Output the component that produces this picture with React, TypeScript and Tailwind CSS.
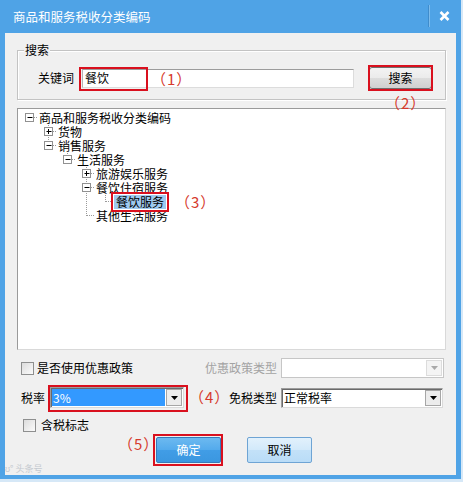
import React from 'react';

type TreeNode = {
  label: string;
  level: number;
  box?: '+' | '-';
  top: boolean;
  bottom: boolean;
  pass: number[];
  selected?: boolean;
};

const nodes: TreeNode[] = [
  { label: '商品和服务税收分类编码', level: 0, box: '-', top: false, bottom: false, pass: [] },
  { label: '货物', level: 1, box: '+', top: true, bottom: true, pass: [] },
  { label: '销售服务', level: 1, box: '-', top: true, bottom: false, pass: [] },
  { label: '生活服务', level: 2, box: '-', top: true, bottom: false, pass: [] },
  { label: '旅游娱乐服务', level: 3, box: '+', top: true, bottom: true, pass: [] },
  { label: '餐饮住宿服务', level: 3, box: '-', top: true, bottom: true, pass: [] },
  { label: '餐饮服务', level: 4, top: true, bottom: false, pass: [3], selected: true },
  { label: '其他生活服务', level: 3, top: true, bottom: false, pass: [] },
];

const dot = { stroke: '#9a9a9a', strokeWidth: 1, strokeDasharray: '1 1' };

// connector lines + expand box for one tree row
const Guides: React.FC<{ n: TreeNode }> = ({ n }) => {
  const w = 21 + 19 * n.level;
  const cx = 11.5 + 19 * n.level;
  const bx = 7.5 + 19 * n.level;
  return (
    <svg width={w} height={14} className="shrink-0">
      {n.pass.map((a) => (
        <line key={a} x1={11.5 + 19 * a} y1={0} x2={11.5 + 19 * a} y2={14} {...dot} />
      ))}
      {n.top && <line x1={cx} y1={0} x2={cx} y2={7} {...dot} />}
      {n.bottom && <line x1={cx} y1={6} x2={cx} y2={14} {...dot} />}
      <line x1={12 + 19 * n.level} y1={6.5} x2={w - 1} y2={6.5} {...dot} />
      {n.box && (
        <g>
          <rect x={bx} y={2.5} width={8} height={8} fill="#fff" stroke="#919191" />
          <line x1={bx + 2} y1={6.5} x2={bx + 7} y2={6.5} stroke="#000" />
          {n.box === '+' && <line x1={bx + 4} y1={4} x2={bx + 4} y2={9} stroke="#000" />}
        </g>
      )}
    </svg>
  );
};

const Mark: React.FC<{ className: string }> = ({ className }) => (
  <span className={`absolute border-2 border-[#d9101e] pointer-events-none ${className}`} />
);

const Note: React.FC<{ text: string; className: string }> = ({ text, className }) => (
  <span className={`absolute whitespace-nowrap text-[15px] leading-[16px] tracking-[1px] text-[#d63a2c] ${className}`}>
    {text}
  </span>
);

const Checkbox = () => (
  <span className="w-[13px] h-[13px] shrink-0 border border-[#8e8f8f] bg-[linear-gradient(135deg,#dcdcdc,#fbfbfb)]" />
);

const Arrow: React.FC<{ disabled?: boolean }> = ({ disabled }) => (
  <svg width="7" height="4" viewBox="0 0 7 4">
    <path d="M0 0h7L3.5 4z" fill={disabled ? '#a9a9a9' : '#000'} />
  </svg>
);

interface ComboProps {
  className: string;
  value?: string;
  selected?: boolean;
  disabled?: boolean;
  children?: React.ReactNode;
}

const Combo: React.FC<ComboProps> = ({ className, value, selected, disabled, children }) => (
  <div
    className={`relative flex bg-white border p-[1px] ${
      disabled
        ? 'border-[#c6c6c6]'
        : 'border-t-[#9c9c9c] border-l-[#9c9c9c] border-r-[#dadada] border-b-[#dadada] shadow-[inset_1px_1px_0_#6a6a6a]'
    } ${className}`}
  >
    <div className={`flex-1 flex items-center pl-[1px] leading-[14px] ${selected ? 'bg-[#3399ff] text-white' : ''}`}>
      {value}
    </div>
    <div
      className={`w-[16px] ml-[1px] flex items-center justify-center border ${
        disabled ? 'border-[#dcdcdc] bg-[#f4f4f4]' : 'border-[#a6a6a6] bg-[#ececec]'
      }`}
    >
      <Arrow disabled={disabled} />
    </div>
    {children}
  </div>
);

export default function App() {
  return (
    <div className="w-[463px] h-[482px] bg-[#d6e8f7] font-['Noto_Sans_CJK_SC',sans-serif] text-[12px] text-black">
      <div className="w-[461px] h-[479px] bg-[#4fa3e6] flex flex-col px-[5px] pb-[4px]">
        {/* title bar */}
        <div className="h-[33px] shrink-0 flex items-center pl-[8px] pr-[6px]">
          <span className="text-white text-[12.5px] leading-[16px]">商品和服务税收分类编码</span>
          <span className="ml-auto self-start mt-[5px] w-[1px] h-[22px] bg-[#3f8ccc] shadow-[1px_0_0_#7dbcec]" />
          <svg width="11" height="10" viewBox="0 0 11 10" className="ml-[10px] mb-[2px]">
            <path d="M1.5 1l8 8M9.5 1l-8 8" stroke="#fff" strokeWidth="2.6" />
          </svg>
        </div>

        {/* client area */}
        <div className="relative flex-1 bg-[#f0f0f0] flex flex-col">
          {/* search group */}
          <div className="relative mt-[17px] ml-[12px] w-[429px] h-[50px] shrink-0 border border-[#c3c3c3] shadow-[inset_1px_1px_0_#fff,1px_1px_0_#fff]">
            <span className="absolute left-[6px] -top-[8px] px-[1px] bg-[#f0f0f0] leading-[14px]">搜索</span>
            <div className="flex items-center h-[22px] mt-[16px] pl-[20px]">
              <span className="w-[36px] leading-[14px]">关键词</span>
              <div className="relative ml-[8px] w-[272px] h-[19px] bg-white border border-t-[#9c9c9c] border-l-[#b5b5b5] border-r-[#dcdcdc] border-b-[#dcdcdc] flex items-center pl-[2px] leading-[14px]">
                餐饮
                <Mark className="-left-[4px] -top-[3px] w-[69px] h-[24px]" />
                <Note text="（1）" className="left-[68px] top-[1px]" />
              </div>
              <div className="relative ml-[15px] w-[63px] h-[22px]">
                <button className="w-full h-full border border-[#707070] rounded-[3px] bg-[linear-gradient(#f3f3f3_0%,#ebebeb_50%,#dddddd_51%,#d0d0d0_100%)] leading-[14px]">
                  搜索
                </button>
                <Mark className="-left-[1px] -top-[2px] w-[65px] h-[26px]" />
                <Note text="（2）" className="left-[16px] top-[28px]" />
              </div>
            </div>
          </div>

          {/* tree */}
          <div className="mt-[8px] ml-[12px] w-[429px] h-[242px] shrink-0 bg-white border border-t-[#9a9a9a] border-l-[#9a9a9a] border-r-[#d9d9d9] border-b-[#d9d9d9] pt-[2px]">
            {nodes.map((n) => (
              <div key={n.label} className="flex items-center h-[14px] whitespace-nowrap">
                <Guides n={n} />
                {n.selected ? (
                  <span className="relative -ml-[1px] px-[2px] h-[14px] leading-[14px] bg-[#9fc9ef]">
                    {n.label}
                    <Mark className="-left-[3px] -top-[3px] w-[58px] h-[20px]" />
                    <Note text="（3）" className="left-[61px] -top-[1px]" />
                  </span>
                ) : (
                  <span className="leading-[14px]">{n.label}</span>
                )}
              </div>
            ))}
          </div>

          {/* policy row */}
          <div className="mt-[8px] h-[20px] shrink-0 flex items-center pl-[16px] pr-[12px]">
            <Checkbox />
            <span className="ml-[3px] leading-[14px]">是否使用优惠政策</span>
            <span className="ml-auto leading-[14px] text-[#a3a3a3]">优惠政策类型</span>
            <Combo className="ml-[4px] w-[163px] h-[20px]" disabled />
          </div>

          {/* tax rate row */}
          <div className="mt-[9px] h-[21px] shrink-0 flex items-center pl-[16px] pr-[13px]">
            <span className="leading-[14px]">税率</span>
            <Combo className="ml-[5px] w-[134px] h-[21px]" value="3%" selected>
              <Mark className="-left-[3px] -top-[3px] w-[140px] h-[27px]" />
              <Note text="（4）" className="left-[138px] top-[1px]" />
            </Combo>
            <span className="ml-auto leading-[14px]">免税类型</span>
            <Combo className="ml-[4px] w-[162px] h-[20px]" value="正常税率" />
          </div>

          {/* tax included */}
          <div className="mt-[10px] h-[14px] shrink-0 flex items-center pl-[18px]">
            <Checkbox />
            <span className="ml-[5px] leading-[14px]">含税标志</span>
          </div>

          {/* buttons */}
          <div className="mt-[5px] shrink-0 flex pl-[151px] gap-[26px]">
            <div className="relative w-[65px] h-[26px]">
              <button className="w-full h-full text-white border border-[#3579b8] rounded-[2px] bg-[linear-gradient(#6cb9f0_0%,#53aaec_50%,#419de6_51%,#3b97e0_100%)] leading-[14px]">
                确定
              </button>
              <Mark className="-left-[3px] -top-[3px] w-[70px] h-[32px]" />
              <Note text="（5）" className="-left-[38px] -top-[1px]" />
            </div>
            <button className="w-[65px] h-[26px] border border-[#6ea4d4] rounded-[2px] bg-[linear-gradient(#e2f1fc_0%,#d2e9fa_50%,#c3e1f8_51%,#b9dcf7_100%)] leading-[14px]">
              取消
            </button>
          </div>

          {/* faint watermark */}
          <div className="absolute left-0 bottom-[1px] flex items-center gap-[2px] text-[9px] leading-[10px] text-[#c4c9cf]">
            <span>ʊ°</span>
            <span>头条号</span>
          </div>
        </div>
      </div>
    </div>
  );
}
